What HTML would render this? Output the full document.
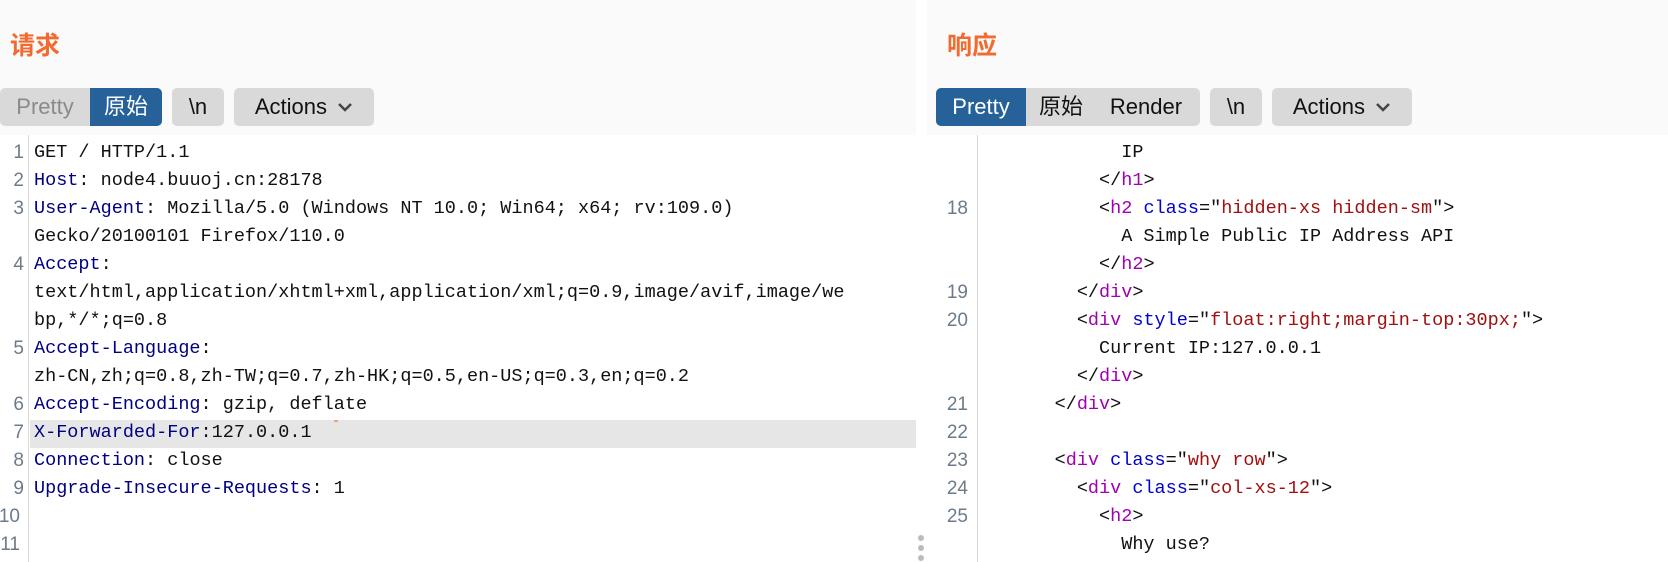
<!DOCTYPE html>
<html><head><meta charset="utf-8"><style>
*{margin:0;padding:0;box-sizing:border-box}
body{width:1668px;height:562px;background:#fff;position:relative;overflow:hidden;font-family:"Liberation Sans","Noto Sans CJK SC",sans-serif}
.hdr{position:absolute;top:0;height:135px;background:#fafafa}
.title{position:absolute;top:31px;font-size:25px;line-height:30px;font-weight:bold;color:#f26a2e;font-family:"Liberation Sans","Noto Sans CJK SC",sans-serif}
.btn{position:absolute;top:88px;height:38px;background:#d9d9d9;border-radius:5px;font-size:22px;line-height:38px;color:#111;overflow:hidden;white-space:nowrap}
.btn span{display:inline-block;height:38px;text-align:center}
.act{background:#27619a;color:#fff}
.code{position:absolute;font-family:"Liberation Mono","Noto Sans CJK SC",monospace;font-size:18.5px;white-space:pre;color:#111}
.row{position:absolute;height:28px;line-height:28px}
.ln{position:absolute;font-family:"Liberation Sans",sans-serif;font-size:19px;color:#6b7b8c;text-align:right;height:28px;line-height:28px}
.k{color:#000080}.t{color:#a000b0}.a{color:#0000d0}.v{color:#a01010}
.gut{position:absolute;top:135px;width:1px;height:427px;background:#d8d8d8}
.dot{position:absolute;width:6px;height:6px;border-radius:3px;background:#bbb;left:918px}
</style></head><body>
<div class="hdr" style="left:0;width:916px"></div>
<div class="hdr" style="left:927px;width:741px"></div>
<div class="title" style="left:10px">请求</div>
<div class="title" style="left:947px">响应</div>

<div class="btn" style="left:0;width:162px"><span style="width:90px;color:#8a8a8a">Pretty</span><span class="act" style="width:72px">原始</span></div>
<div class="btn" style="left:172px;width:52px"><span style="width:52px">\n</span></div>
<div class="btn" style="left:234px;width:140px"><span style="width:140px">Actions <svg width="16" height="10" viewBox="0 0 16 10" style="vertical-align:2px;margin-left:4px"><path d="M2 2 L8 8 L14 2" stroke="#444" stroke-width="2.5" fill="none"/></svg></span></div>

<div class="btn" style="left:936px;width:264px"><span class="act" style="width:90px">Pretty</span><span style="width:70px">原始</span><span style="width:100px">Render</span></div>
<div class="btn" style="left:1210px;width:52px"><span style="width:52px">\n</span></div>
<div class="btn" style="left:1272px;width:140px"><span style="width:140px">Actions <svg width="16" height="10" viewBox="0 0 16 10" style="vertical-align:2px;margin-left:4px"><path d="M2 2 L8 8 L14 2" stroke="#444" stroke-width="2.5" fill="none"/></svg></span></div>

<div class="gut" style="left:28px"></div>
<div class="gut" style="left:977px"></div>
<div style="position:absolute;left:30px;top:420px;width:886px;height:28px;background:#e6e6e6"></div>
<div style="position:absolute;left:880px;top:420px;width:36px;height:28px;background:#e6e6e6"></div>
<div style="position:absolute;left:334px;top:420px;width:4px;height:2px;background:#f4a070"></div>
<div class="dot" style="top:535px"></div><div class="dot" style="top:545px"></div><div class="dot" style="top:555px"></div>

<div class="ln" style="left:0;width:24px;top:139px">1</div>
<div class="ln" style="left:0;width:24px;top:167px">2</div>
<div class="ln" style="left:0;width:24px;top:195px">3</div>
<div class="ln" style="left:0;width:24px;top:251px">4</div>
<div class="ln" style="left:0;width:24px;top:335px">5</div>
<div class="ln" style="left:0;width:24px;top:391px">6</div>
<div class="ln" style="left:0;width:24px;top:419px">7</div>
<div class="ln" style="left:0;width:24px;top:447px">8</div>
<div class="ln" style="left:0;width:24px;top:475px">9</div>
<div class="ln" style="left:-4px;width:24px;top:503px">10</div>
<div class="ln" style="left:-4px;width:24px;top:531px">11</div>

<div class="code" style="left:34px;top:0">
<div class="row" style="top:139px">GET / HTTP/1.1</div>
<div class="row" style="top:167px"><span class="k">Host</span>: node4.buuoj.cn:28178</div>
<div class="row" style="top:195px"><span class="k">User-Agent</span>: Mozilla/5.0 (Windows NT 10.0; Win64; x64; rv:109.0)</div>
<div class="row" style="top:223px">Gecko/20100101 Firefox/110.0</div>
<div class="row" style="top:251px"><span class="k">Accept</span>:</div>
<div class="row" style="top:279px">text/html,application/xhtml+xml,application/xml;q=0.9,image/avif,image/we</div>
<div class="row" style="top:307px">bp,*/*;q=0.8</div>
<div class="row" style="top:335px"><span class="k">Accept-Language</span>:</div>
<div class="row" style="top:363px">zh-CN,zh;q=0.8,zh-TW;q=0.7,zh-HK;q=0.5,en-US;q=0.3,en;q=0.2</div>
<div class="row" style="top:391px"><span class="k">Accept-Encoding</span>: gzip, deflate</div>
<div class="row" style="top:419px"><span class="k">X-Forwarded-For</span>:127.0.0.1</div>
<div class="row" style="top:447px"><span class="k">Connection</span>: close</div>
<div class="row" style="top:475px"><span class="k">Upgrade-Insecure-Requests</span>: 1</div>
</div>

<div class="ln" style="left:930px;width:38px;top:195px">18</div>
<div class="ln" style="left:930px;width:38px;top:279px">19</div>
<div class="ln" style="left:930px;width:38px;top:307px">20</div>
<div class="ln" style="left:930px;width:38px;top:391px">21</div>
<div class="ln" style="left:930px;width:38px;top:419px">22</div>
<div class="ln" style="left:930px;width:38px;top:447px">23</div>
<div class="ln" style="left:930px;width:38px;top:475px">24</div>
<div class="ln" style="left:930px;width:38px;top:503px">25</div>

<div class="code" style="left:988px;top:0">
<div class="row" style="top:139px">            IP</div>
<div class="row" style="top:167px">          &lt;/<span class="t">h1</span>&gt;</div>
<div class="row" style="top:195px">          &lt;<span class="t">h2</span> <span class="a">class</span>="<span class="v">hidden-xs hidden-sm</span>"&gt;</div>
<div class="row" style="top:223px">            A Simple Public IP Address API</div>
<div class="row" style="top:251px">          &lt;/<span class="t">h2</span>&gt;</div>
<div class="row" style="top:279px">        &lt;/<span class="t">div</span>&gt;</div>
<div class="row" style="top:307px">        &lt;<span class="t">div</span> <span class="a">style</span>="<span class="v">float:right;margin-top:30px;</span>"&gt;</div>
<div class="row" style="top:335px">          Current IP:127.0.0.1</div>
<div class="row" style="top:363px">        &lt;/<span class="t">div</span>&gt;</div>
<div class="row" style="top:391px">      &lt;/<span class="t">div</span>&gt;</div>
<div class="row" style="top:447px">      &lt;<span class="t">div</span> <span class="a">class</span>="<span class="v">why row</span>"&gt;</div>
<div class="row" style="top:475px">        &lt;<span class="t">div</span> <span class="a">class</span>="<span class="v">col-xs-12</span>"&gt;</div>
<div class="row" style="top:503px">          &lt;<span class="t">h2</span>&gt;</div>
<div class="row" style="top:531px">            Why use?</div>
</div>
</body></html>
